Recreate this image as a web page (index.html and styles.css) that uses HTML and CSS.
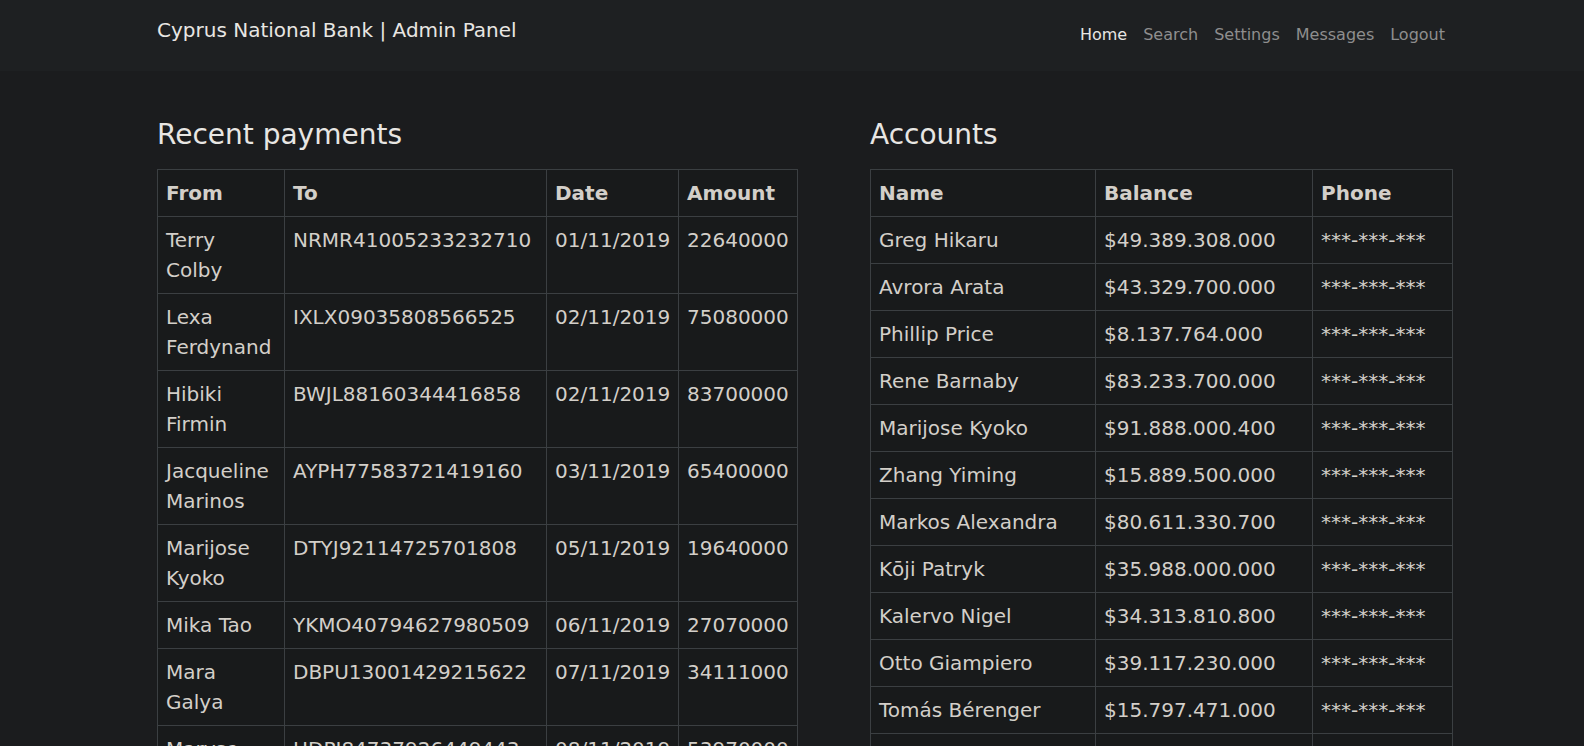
FILE: index.html
```html
<!DOCTYPE html>
<html lang="en">
<head>
<meta charset="utf-8">
<title>Cyprus National Bank | Admin Panel</title>
<link rel="stylesheet" href="styles.css">
</head>
<body>
<header class="navbar">
  <div class="nav-inner">
    <a class="brand" href="#">Cyprus National Bank | Admin Panel</a>
    <nav class="nav">
      <a class="nav-link active" href="#">Home</a>
      <a class="nav-link" href="#">Search</a>
      <a class="nav-link" href="#">Settings</a>
      <a class="nav-link" href="#">Messages</a>
      <a class="nav-link" href="#">Logout</a>
    </nav>
  </div>
</header>
<main class="main">
  <section class="panel panel-payments">
    <h3 class="panel-title">Recent payments</h3>
    <table class="table table-payments">
      <colgroup>
        <col class="c-from"><col class="c-to"><col class="c-date"><col class="c-amount">
      </colgroup>
      <thead>
        <tr><th>From</th><th>To</th><th>Date</th><th>Amount</th></tr>
      </thead>
      <tbody>
        <tr><td>Terry Colby</td><td>NRMR41005233232710</td><td>01/11/2019</td><td>22640000</td></tr>
        <tr><td>Lexa Ferdynand</td><td>IXLX09035808566525</td><td>02/11/2019</td><td>75080000</td></tr>
        <tr><td>Hibiki Firmin</td><td>BWJL88160344416858</td><td>02/11/2019</td><td>83700000</td></tr>
        <tr><td>Jacqueline Marinos</td><td>AYPH77583721419160</td><td>03/11/2019</td><td>65400000</td></tr>
        <tr><td>Marijose Kyoko</td><td>DTYJ92114725701808</td><td>05/11/2019</td><td>19640000</td></tr>
        <tr><td>Mika Tao</td><td>YKMO40794627980509</td><td>06/11/2019</td><td>27070000</td></tr>
        <tr><td>Mara Galya</td><td>DBPU13001429215622</td><td>07/11/2019</td><td>34111000</td></tr>
        <tr><td>Maryse Ilse</td><td>HDPI84737926449443</td><td>08/11/2019</td><td>53970000</td></tr>
        <tr><td>Otto Giampiero</td><td>KQRT55120387416092</td><td>09/11/2019</td><td>41250000</td></tr>
      </tbody>
    </table>
  </section>
  <section class="panel panel-accounts">
    <h3 class="panel-title">Accounts</h3>
    <table class="table table-accounts">
      <colgroup>
        <col class="c-name"><col class="c-balance"><col class="c-phone">
      </colgroup>
      <thead>
        <tr><th>Name</th><th>Balance</th><th>Phone</th></tr>
      </thead>
      <tbody>
        <tr><td>Greg Hikaru</td><td>$49.389.308.000</td><td>***-***-***</td></tr>
        <tr><td>Avrora Arata</td><td>$43.329.700.000</td><td>***-***-***</td></tr>
        <tr><td>Phillip Price</td><td>$8.137.764.000</td><td>***-***-***</td></tr>
        <tr><td>Rene Barnaby</td><td>$83.233.700.000</td><td>***-***-***</td></tr>
        <tr><td>Marijose Kyoko</td><td>$91.888.000.400</td><td>***-***-***</td></tr>
        <tr><td>Zhang Yiming</td><td>$15.889.500.000</td><td>***-***-***</td></tr>
        <tr><td>Markos Alexandra</td><td>$80.611.330.700</td><td>***-***-***</td></tr>
        <tr><td>Kōji Patryk</td><td>$35.988.000.000</td><td>***-***-***</td></tr>
        <tr><td>Kalervo Nigel</td><td>$34.313.810.800</td><td>***-***-***</td></tr>
        <tr><td>Otto Giampiero</td><td>$39.117.230.000</td><td>***-***-***</td></tr>
        <tr><td>Tomás Bérenger</td><td>$15.797.471.000</td><td>***-***-***</td></tr>
        <tr><td>Lexa Ferdynand</td><td>$22.640.000.000</td><td>***-***-***</td></tr>
      </tbody>
    </table>
  </section>
</main>
</body>
</html>
```
FILE: styles.css
```css
* { box-sizing: border-box; }
html, body { margin: 0; padding: 0; }
body {
  background: #1b1c1e;
  color: #d3cfc9;
  font-family: "DejaVu Sans", "Liberation Sans", sans-serif;
  font-size: 20px;
  line-height: 1.5;
}
a { text-decoration: none; }

.navbar {
  background: #1e2022;
  height: 71px;
  padding-top: 15px;
}
.nav-inner {
  width: 1296px;
  margin-left: 157px;
  display: flex;
  justify-content: space-between;
  align-items: flex-start;
}
.brand {
  color: #e8e6e3;
  font-size: 20px;
  line-height: 30px;
}
.nav { display: flex; }
.nav-link {
  color: #8e8e8e;
  font-size: 16px;
  line-height: 24px;
  padding: 8px 8px;
}
.nav-link.active { color: #e8e6e3; }

.main {
  display: grid;
  grid-template-columns: 640px 582px;
  column-gap: 73px;
  margin-left: 157px;
  padding-top: 47px;
}
.panel-title {
  margin: 0 0 17px 0;
  font-size: 28px;
  font-weight: 400;
  line-height: 1.2;
  color: #e8e6e3;
}
.table {
  border-collapse: collapse;
  table-layout: fixed;
  background: #181a1b;
}
.table-payments { width: 640px; }
.table-accounts { width: 582px; }
.table th, .table td {
  border: 1px solid #3b3f42;
  padding: 8px;
  text-align: left;
  vertical-align: top;
}
.table th { font-weight: 700; }

.c-from { width: 127px; }
.c-to { width: 262px; }
.c-date { width: 132px; }
.c-amount { width: 119px; }
.c-name { width: 225px; }
.c-balance { width: 217px; }
.c-phone { width: 140px; }
```
